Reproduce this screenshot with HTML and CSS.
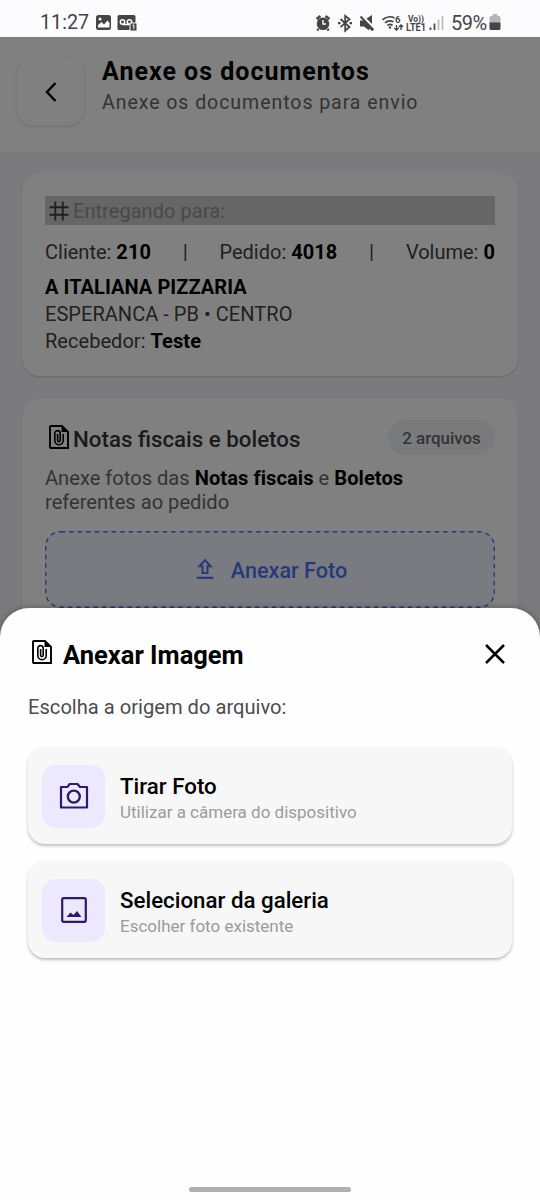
FILE: index.html
```html
<!DOCTYPE html>
<html lang="pt-BR">
<head>
<meta charset="utf-8">
<title>Anexe os documentos</title>
<link rel="stylesheet" href="styles.css">
</head>
<body>
<div class="screen">
  <div class="statusbar">
    <span class="clock">11:27</span>
    <svg class="notif" width="44" height="18" viewBox="0 0 44 18">
      <rect x="1" y="1" width="15" height="15" rx="2.500" fill="#454547"/>
      <path d="M3 13.500V11l3.500-3 2.500 2.500L12.500 6.500 14.500 9v4.500z" fill="#fcfcff"/><circle cx="5" cy="5" r="1.500" fill="#fcfcff"/>
      <rect x="22.500" y="1" width="18" height="15" rx="1.500" fill="#454547"/>
      <g fill="none" stroke="#fcfcff" stroke-width="1.500"><circle cx="27.500" cy="8" r="2.200"/><circle cx="34.500" cy="8" r="2.200"/><path d="M27.500 10.500h7"/></g>
      <path d="M35 9h7v8h-7z" fill="#454547" stroke="#fcfcff" stroke-width="1"/><path d="M37.500 11.500l1.300-.7V15" fill="none" stroke="#fcfcff" stroke-width="1"/>
    </svg>
    <svg class="sysicons" width="132" height="20" viewBox="315 12 132 20">
      <circle cx="323" cy="22.800" r="6.300" fill="#454547"/><path d="M316.500 18l4-3M325.500 15l4 3M318.500 28l-1.200 1.500M327.500 28l1.200 1.500" stroke="#454547" stroke-width="2.400" fill="none"/><path d="M323 19v4h3" stroke="#fcfcff" stroke-width="1.400" fill="none"/>
      <path d="M340.500 18l9 8-4.300 3.700V14.800l4.300 3.400-9 8" fill="none" stroke="#454547" stroke-width="1.800"/><path d="M338 22.200h2.500M349.500 22.200h2.500" stroke="#454547" stroke-width="2.200"/>
      <path d="M360 19.500h4l9 9v1l-1 .5-3-2.500v2l-5-4h-4zM366.500 17.500l5.500-3.500v9z" fill="#454547"/><path d="M360.500 15.500l13 13.500" stroke="#454547" stroke-width="1.900"/>
      <g fill="none" stroke="#454547" stroke-width="1.700"><path d="M382.500 18.800c3.500-3.300 8.500-3.500 12-1.800M385 21.800c2.500-2.200 5.500-2.500 8.500-1M387.500 24.500c1.700-1.300 3.500-1.300 5 0"/><path d="M396.500 24v5M394.300 27l2.200 2 2.200-2M401 29v-5M398.900 26l2.100-2 2.100 2" stroke-width="1.400"/></g><circle cx="390" cy="26.500" r="1.200" fill="#454547"/>
      <text class="tiny" x="395" y="21.500" font-size="9.500">6</text>
      <text class="tiny" x="408" y="21" font-size="9.500" textLength="16" lengthAdjust="spacingAndGlyphs">Vo))</text>
      <text class="tiny" x="406" y="29.800" font-size="10" textLength="20" lengthAdjust="spacingAndGlyphs">LTE1</text>
      <path d="M430.500 26.500v2.500M434.500 22.500v6.500" stroke="#454547" stroke-width="1.700"/><path d="M438.500 18.500v10.500M442.500 15v14" stroke="#bbbbbd" stroke-width="1.700"/>
    </svg>
    <span class="percent">59%</span>
    <svg class="battery" width="12" height="17" viewBox="0 0 12 17"><path d="M3.500 2V1q0-1 1-1h3q1 0 1 1v1H10q1.500 0 1.500 1.500V9H.5V3.500Q.5 2 2 2z" fill="#b5b5b7"/><path d="M.5 8.500h11v6q0 1.500-1.500 1.500H2q-1.500 0-1.500-1.500z" fill="#454547"/></svg>
  </div>

  <header class="header">
    <div class="back"><svg width="20" height="24" viewBox="0 0 20 24"><path d="M14.500 3L6 12l8.500 9" fill="none" stroke="#000" stroke-width="2.500"/></svg></div>
    <div class="headings">
      <h1>Anexe os documentos</h1>
      <p>Anexe os documentos para envio</p>
    </div>
  </header>

  <main class="content">
    <section class="card delivery">
      <div class="band">
        <svg width="20" height="20" viewBox="0 0 20 20"><path d="M6.300 .5v19M13.700 .5v19M.5 6.300h19M.5 13.700h19" fill="none" stroke="#202020" stroke-width="1.900"/></svg>
        <span>Entregando para:</span>
      </div>
      <div class="facts">
        <span>Cliente: <b>210</b></span><span class="bar">|</span><span>Pedido: <b>4018</b></span><span class="bar">|</span><span>Volume: <b>0</b></span>
      </div>
      <div class="line"><b>A ITALIANA PIZZARIA</b></div>
      <div class="line">ESPERANCA - PB • CENTRO</div>
      <div class="line">Recebedor: <b>Teste</b></div>
    </section>

    <section class="card invoices">
      <div class="card-head">
        <svg class="doc" width="20" height="24" viewBox="0 0 20 24"><path d="M2 1h11l6 6v16H2q-1 0-1-1V2q0-1 1-1z" fill="none" stroke="#000" stroke-width="1.900"/><path d="M12.500 1v6H19z" fill="#000"/><path d="M14.200 9v6.500a4.200 4.200 0 0 1-8.400 0V8.300a2.700 2.700 0 0 1 5.400 0v7a1.300 1.300 0 0 1-2.600 0V9" fill="none" stroke="#000" stroke-width="1.600"/></svg>
        <h2>Notas fiscais e boletos</h2>
        <span class="pill">2 arquivos</span>
      </div>
      <p class="hint">Anexe fotos das <b>Notas fiscais</b> e <b>Boletos</b><br>referentes ao pedido</p>
      <div class="drop">
        <svg class="dash" width="450" height="77"><rect x=".7" y=".7" width="448.600" height="75.600" rx="15" fill="none" stroke="#273979" stroke-width="1.400" stroke-dasharray="4.500 4"/></svg>
        <svg class="upload" width="18" height="22" viewBox="0 0 18 22"><path d="M9 2.200L3.300 8.200H6.500V15h5V8.200h3.200z" fill="none" stroke="#273979" stroke-width="2"/><path d="M.7 19.800h16.600" stroke="#273979" stroke-width="2.200"/></svg>
        <span>Anexar Foto</span>
      </div>
    </section>
  </main>

  <div class="sheet">
    <div class="sheet-head">
      <svg class="doc" width="20" height="24" viewBox="0 0 20 24"><path d="M2 1h11l6 6v16H2q-1 0-1-1V2q0-1 1-1z" fill="none" stroke="#000" stroke-width="1.900"/><path d="M12.500 1v6H19z" fill="#000"/><path d="M14.200 9v6.500a4.200 4.200 0 0 1-8.400 0V8.300a2.700 2.700 0 0 1 5.400 0v7a1.300 1.300 0 0 1-2.600 0V9" fill="none" stroke="#000" stroke-width="1.600"/></svg>
      <h2>Anexar Imagem</h2>
      <svg class="close" width="20" height="20" viewBox="0 0 20 20"><path d="M1 1l18 18M19 1L1 19" stroke="#000" stroke-width="2.500"/></svg>
    </div>
    <p class="prompt">Escolha a origem do arquivo:</p>
    <div class="option">
      <div class="tile"><svg width="30" height="28" viewBox="0 0 30 28"><path d="M2 5H8.500L10.500 2h8l2.500 3H28V25.500H2z" fill="none" stroke="#2f1a66" stroke-width="2.200" stroke-linejoin="round"/><circle cx="14.800" cy="14.600" r="6" fill="none" stroke="#2f1a66" stroke-width="2.400"/></svg></div>
      <div class="labels"><h3>Tirar Foto</h3><p>Utilizar a câmera do dispositivo</p></div>
    </div>
    <div class="option">
      <div class="tile"><svg width="26" height="26" viewBox="0 0 26 26"><rect x="1.200" y="1.200" width="23.600" height="23.600" rx="1.500" fill="none" stroke="#2f1a66" stroke-width="2.200"/><path d="M5.500 20l4-4.500 3 2.500 3.500-4 4.500 6z" fill="#2f1a66"/></svg></div>
      <div class="labels"><h3>Selecionar da galeria</h3><p>Escolher foto existente</p></div>
    </div>
  </div>
  <div class="homebar"></div>
</div>
</body>
</html>
```
FILE: styles.css
```css
* { box-sizing: border-box; margin: 0; }
body { font-family: Roboto, "Liberation Sans", sans-serif; background: #fff; }
svg { display: block; flex: none; }
b { font-weight: 700; color: #000; letter-spacing: 0.060px; }
.screen { position: relative; width: 540px; height: 1200px; overflow: hidden; background: #7b7b7e; white-space: nowrap; }

.statusbar { height: 37px; background: #fcfcff; display: flex; align-items: center; padding: 8px 0 0 40px; color: #454547; font-size: 19.700px; line-height: 28px; }
.clock { width: 55px; }
.sysicons { margin-left: 176px; }
.percent { margin-left: 4px; width: 38px; font-size: 20px; letter-spacing: -0.500px; }
.tiny { font-weight: 700; fill: #454547; }

.header { height: 114px; background: #808080; display: flex; padding: 20px 16px; gap: 16px; }
.back { width: 69px; height: 69px; border-radius: 17px; background: #808080; border: 1px solid #7b7b7b; box-shadow: 0 1px 2px rgba(0,0,0,.12); display: flex; align-items: center; justify-content: center; }
.headings h1 { font-size: 25px; line-height: 30px; font-weight: 700; letter-spacing: 1px; color: #000; margin-left: 1px; }
.headings p { font-size: 19.500px; line-height: 31px; letter-spacing: 0.960px; color: #333; margin-left: 1px; }

.content { padding: 22px; display: flex; flex-direction: column; gap: 22px; }
.card { background: #808080; border-radius: 18px; padding: 23px; box-shadow: 0 1px 2px rgba(0,0,0,.16); font-size: 20px; color: #202020; }
.delivery { height: 203px; }
.band { height: 29px; background: #666; display: flex; align-items: center; gap: 5px; padding-left: 4px; color: #494949; }
.band span { margin-left: -1px; padding-top: 1px; letter-spacing: 0.050px; }
.facts { display: flex; justify-content: space-between; line-height: 27px; margin: 14px 0 8px; }
.bar { font-size: 21px; }
.line { line-height: 27px; letter-spacing: 0.040px; }
.invoices { height: 240px; }
.card-head { display: flex; align-items: center; height: 35px; margin-top: -1px; padding-left: 4px; gap: 5px; }
.card-head .doc { margin-top: -1px; }
.card-head h2 { font-size: 22.300px; font-weight: 500; color: #1a1a1a; flex: 1; padding-top: 2px; margin-left: -1px; }
.pill { width: 107px; height: 35px; border-radius: 18px; background: #787a7c; display: flex; align-items: center; justify-content: center; font-size: 16.900px; font-weight: 500; color: #333; }
.hint { color: #333; line-height: 23.500px; margin-top: 11px; font-size: 20.120px; }
.hint { padding-top: 1px; }
.drop { position: relative; margin-top: 17px; height: 77px; border-radius: 15px; background: #797b80; display: flex; align-items: center; justify-content: center; gap: 17px; color: #273979; font-size: 21.600px; font-weight: 500; padding: 1px 0 0 3px; }
.upload { margin-top: -3px; }
.dash { position: absolute; inset: 0; }

.sheet { position: absolute; left: 0; right: 0; top: 608px; bottom: 0; background: #fefefe; border-radius: 29px 29px 0 0; padding: 30px 28px; box-shadow: 0 0 6px rgba(0,0,0,.3); }
.sheet-head { display: flex; align-items: center; height: 32px; padding: 0 7px 0 4px; }
.sheet-head .doc { margin-top: -5px; }
.sheet-head h2 { font-size: 25.500px; font-weight: 700; margin-left: 11px; flex: 1; padding-top: 1px; }
.sheet-head .close { margin-top: -1px; }
.prompt { font-size: 20.150px; line-height: 28px; margin: 23px 0 26px; color: #4d4d4d; }
.option { height: 97px; margin-bottom: 17px; background: #f7f7f7; border-radius: 17px; box-shadow: 0 2px 3px rgba(0,0,0,.25); display: flex; align-items: center; padding: 1px 0 0 14px; gap: 15px; }
.tile { width: 63px; height: 63px; border-radius: 14px; background: #ece9ff; display: flex; align-items: center; justify-content: center; }
.labels { padding-top: 3px; }
.labels h3 { font-size: 22.300px; line-height: 28px; font-weight: 500; color: #000; }
.labels p { font-size: 17px; line-height: 24px; color: #9b9b9b; }
.homebar { position: absolute; left: 189px; top: 1187px; width: 162px; height: 5px; border-radius: 3px; background: #b0b0b0; }
```
